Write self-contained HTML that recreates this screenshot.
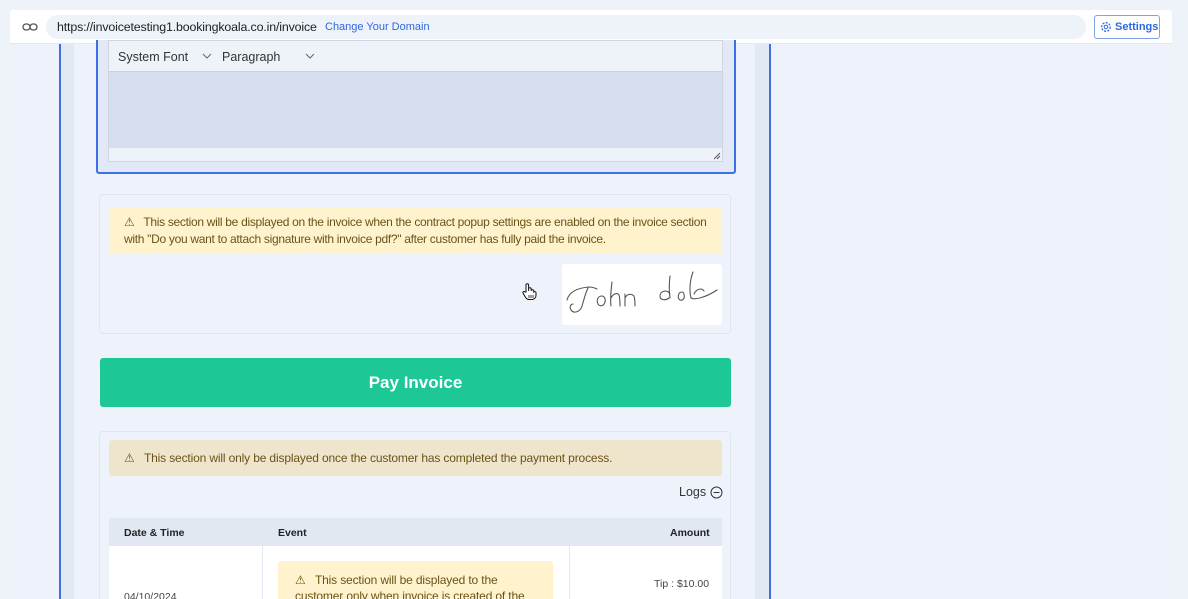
<!DOCTYPE html>
<html><head><meta charset="utf-8"><style>
*{box-sizing:border-box;margin:0;padding:0}
html,body{width:1188px;height:599px;overflow:hidden}
body{background:#eef2f9;font-family:"Liberation Sans",Arial,sans-serif;position:relative}
.a{position:absolute}
.warn{color:#6b5318;font-size:12px;letter-spacing:-0.15px}
</style></head><body>
<div class="a" style="left:10px;top:10px;width:1162px;height:600px;background:#eef3fb"></div>
<div class="a" style="left:61px;top:44px;width:13px;height:560px;background:#e3e9f3"></div>
<div class="a" style="left:59px;top:44px;width:2px;height:560px;background:#3d6fe6"></div>
<div class="a" style="left:755px;top:44px;width:14px;height:560px;background:#e3e9f3"></div>
<div class="a" style="left:769px;top:44px;width:2px;height:560px;background:#3d6fe6"></div>
<!-- top bar -->
<div class="a" style="left:10px;top:10px;width:1162px;height:34px;background:#fff;border-bottom:1px solid #e3e8f0;border-radius:3px 3px 0 0"></div>
<svg class="a" style="left:22px;top:22px" width="16" height="10" viewBox="0 0 16 10"><rect x="1" y="2" width="7" height="6" rx="3" fill="none" stroke="#555" stroke-width="1.3"/><rect x="8" y="2" width="7" height="6" rx="3" fill="none" stroke="#555" stroke-width="1.3"/></svg>
<div class="a" style="left:46px;top:15px;width:1040px;height:24px;border-radius:12px;background:#eef2f9"></div>
<div class="a" style="left:57px;top:20px;font-size:12.4px;color:#222;letter-spacing:-0.15px">https://invoicetesting1.bookingkoala.co.in/invoice</div>
<div class="a" style="left:325px;top:21px;font-size:11px;color:#2e68e0">Change Your Domain</div>
<div class="a" style="left:1094px;top:15px;width:66px;height:24px;border:1px solid #7fa1ea;border-radius:3px;background:#fff"></div>
<svg class="a" style="left:1100px;top:21px" width="12" height="12" viewBox="0 0 12 12"><circle cx="6" cy="6" r="4.3" fill="none" stroke="#2e68e0" stroke-width="1.3" stroke-dasharray="2 1.3"/><circle cx="6" cy="6" r="1.8" fill="none" stroke="#2e68e0" stroke-width="1"/></svg>
<div class="a" style="left:1115px;top:21px;font-size:11px;font-weight:bold;color:#2e68e0">Settings</div>
<!-- editor -->
<div class="a" style="left:96px;top:40px;width:640px;height:134px;border:2px solid #3d6fe6;border-top:none;border-radius:0 0 3px 3px;background:#e3e8f9"></div>
<div class="a" style="left:108px;top:40px;width:615px;height:122px;border:1px solid #cfd6e2;background:#eef2f9"></div>
<div class="a" style="left:109px;top:71px;width:613px;height:77px;background:#d7dfee;border-top:1px solid #c9d1df"></div>
<div class="a" style="left:118px;top:50px;font-size:12.5px;color:#333">System Font</div>
<div class="a" style="left:222px;top:50px;font-size:12.5px;color:#333">Paragraph</div>
<svg class="a" style="left:202px;top:53px" width="10" height="6"><path d="M1 1l4 4 4-4" fill="none" stroke="#666"/></svg>
<svg class="a" style="left:305px;top:53px" width="10" height="6"><path d="M1 1l4 4 4-4" fill="none" stroke="#666"/></svg>
<svg class="a" style="left:713px;top:152px" width="8" height="8"><path d="M7 1L1 7M7 4L4 7" stroke="#555"/></svg>
<!-- signature section -->
<div class="a" style="left:99px;top:194px;width:632px;height:140px;border:1px solid #e0e6f0;border-radius:4px;background:#eef3fb"></div>
<div class="a" style="left:109px;top:208px;width:613px;height:46px;background:#fff3cd;border-radius:3px"></div>
<div class="a warn" style="left:124px;top:214px;width:610px;line-height:17px;letter-spacing:-0.3px">⚠&nbsp;&nbsp; This section will be displayed on the invoice when the contract popup settings are enabled on the invoice section<br>with "Do you want to attach signature with invoice pdf?" after customer has fully paid the invoice.</div>
<svg class="a" style="left:521px;top:282px" width="16" height="18" viewBox="0 0 16 18"><path d="M5 10V3a1.3 1.3 0 0 1 2.6 0v6V7a1.3 1.3 0 0 1 2.6 0v2a1.3 1.3 0 0 1 2.6 0v1a1.3 1.3 0 0 1 2.2 .5V13c0 3-2 4.5-4.5 4.5H8c-2 0-3-1-4-3L2 11c-.6-1.2 1-2 2-1z" fill="#fff" stroke="#111" stroke-width="1"/><path d="M8 13v3M10 13v3M12 13v3" stroke="#111" stroke-width=".8"/></svg>
<div class="a" style="left:562px;top:264px;width:160px;height:61px;background:#fff;border-radius:3px"></div>
<svg class="a" style="left:562px;top:264px" width="160" height="61" viewBox="0 0 160 61"><g fill="none" stroke="#555" stroke-width="1.1" stroke-linecap="round"><path d="M5 36c2-8 10-12 22-13c4 0 6 1 8 2M26 24c-3 6-4 12-6 18c-2 6-8 8-11 4c-2-3 0-6 2-6"/><path d="M40 32c-4 0-6 4-4 8c2 3 6 2 7-2c1-3-1-6-3-6"/><path d="M50 18c-1 8-2 16-1 24M49 34c2-4 6-6 8-3c1 3 1 7 1 11"/><path d="M63 30c0 4 0 8 0 12M63 34c2-4 6-5 9-2c1 3 1 6 1 10"/><path d="M108 12c-1 8-1 15 0 22M108 30c-3-5-10-3-10 2c0 4 5 5 9 2"/><path d="M120 28c-4 0-5 6-2 8c3 1 5-2 4-5c0-2-1-3-2-3"/><path d="M131 8c-3 8-4 18-2 26c3 2 14 0 26-8M132 30c3-6 8-6 10-3"/></g></svg>
<!-- pay -->
<div class="a" style="left:100px;top:358px;width:631px;height:49px;background:#1dc896;border-radius:3px;color:#fff;font-weight:bold;font-size:17px;text-align:center;line-height:49px">Pay Invoice</div>
<!-- logs -->
<div class="a" style="left:99px;top:431px;width:632px;height:180px;border:1px solid #e0e6f0;border-radius:4px;background:#eef3fb"></div>
<div class="a" style="left:109px;top:440px;width:613px;height:36px;background:#efe5cc;border-radius:3px"></div>
<div class="a warn" style="left:124px;top:451px">⚠&nbsp;&nbsp; This section will only be displayed once the customer has completed the payment process.</div>
<div class="a" style="left:679px;top:485px;font-size:12.5px;color:#333">Logs</div>
<svg class="a" style="left:710px;top:486px" width="13" height="13"><circle cx="6.5" cy="6.5" r="5.5" fill="none" stroke="#333"/><path d="M3.5 6.5h6" stroke="#333"/></svg>
<div class="a" style="left:109px;top:518px;width:613px;height:90px;background:#fff"></div>
<div class="a" style="left:109px;top:518px;width:613px;height:28px;background:#e2e8f1"></div>
<div class="a" style="left:262px;top:518px;width:1px;height:90px;background:#e2e8f1"></div>
<div class="a" style="left:569px;top:518px;width:1px;height:90px;background:#e2e8f1"></div>
<div class="a" style="left:124px;top:527px;font-size:10.5px;font-weight:bold;color:#222">Date &amp; Time</div>
<div class="a" style="left:278px;top:527px;font-size:10.5px;font-weight:bold;color:#222">Event</div>
<div class="a" style="left:670px;top:527px;font-size:10.5px;font-weight:bold;color:#222">Amount</div>
<div class="a" style="left:278px;top:561px;width:275px;height:50px;background:#fff3cd;border-radius:3px"></div>
<div class="a warn" style="left:295px;top:572px;width:250px;line-height:16px">⚠&nbsp;&nbsp; This section will be displayed to the customer only when invoice is created of the</div>
<div class="a" style="left:654px;top:578px;font-size:10.5px;color:#444">Tip : $10.00</div>
<div class="a" style="left:124px;top:591px;font-size:10.5px;color:#444">04/10/2024</div>
</body></html>
